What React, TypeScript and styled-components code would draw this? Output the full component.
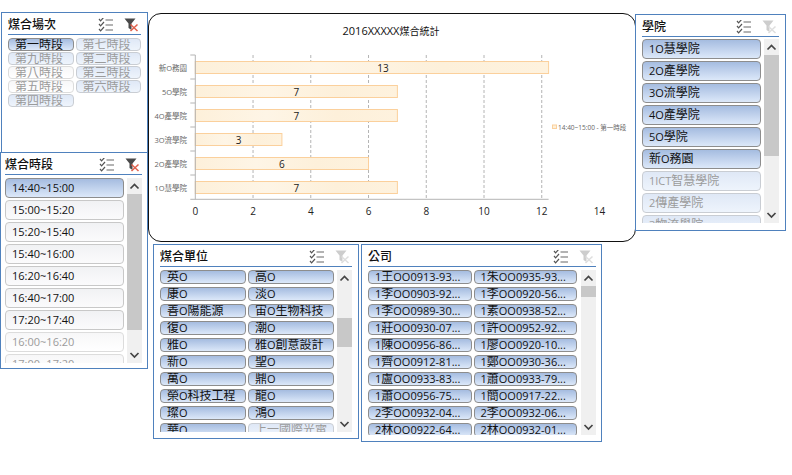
import styled, { createGlobalStyle } from "styled-components";

const FONT = `"Open Sans", "Noto Sans CJK TC", sans-serif`;

const GlobalStyle = createGlobalStyle`
  html, body {
    margin: 0;
    padding: 0;
    background: #fff;
    font-family: ${FONT};
  }
`;

const Canvas = styled.div`
  position: relative;
  width: 792px;
  height: 475px;
  overflow: hidden;
  background: #fff;
`;

const Panel = styled.section<{ $x: number; $y: number; $w: number; $h: number; $pl: number; $pr: number }>`
  position: absolute;
  left: ${(p) => p.$x}px;
  top: ${(p) => p.$y}px;
  width: ${(p) => p.$w}px;
  height: ${(p) => p.$h}px;
  box-sizing: border-box;
  border: 1px solid #4f81bd;
  background: #fff;
  padding: 0 ${(p) => p.$pr}px 0 ${(p) => p.$pl}px;
  display: flex;
  flex-direction: column;
  z-index: 2;
`;

const Header = styled.header`
  flex: none;
  box-sizing: border-box;
  height: 22px;
  padding: 2px 2px 0 0;
  border-bottom: 1px solid #4f81bd;
  display: flex;
  align-items: center;
  gap: 10px;
`;

const Title = styled.h2`
  flex: 1;
  margin: 0;
  font-size: 12px;
  font-weight: 500;
  color: #111;
  line-height: 18px;
`;

const Body = styled.div<{ $h: number; $top: number; $gutter: number }>`
  flex: none;
  margin-top: ${(p) => p.$top}px;
  height: ${(p) => p.$h}px;
  display: flex;
  gap: ${(p) => p.$gutter}px;
`;

const ItemGrid = styled.div<{ $cols: number; $row: number; $pitch: number }>`
  flex: 1;
  min-width: 0;
  overflow: hidden;
  display: grid;
  align-content: start;
  grid-template-columns: repeat(${(p) => p.$cols}, minmax(0, 1fr));
  grid-auto-rows: ${(p) => p.$row}px;
  column-gap: 2px;
  row-gap: ${(p) => p.$pitch - p.$row}px;
`;

type ItemState = "on" | "onFaded" | "off" | "offFaded";

const stateBg: Record<ItemState, string> = {
  on: "linear-gradient(#a5bce0, #dce8f9)",
  onFaded: "linear-gradient(#dfe8f6, #eef4fc)",
  off: "linear-gradient(#f1f2f4, #fbfbfc)",
  offFaded: "linear-gradient(#f7f7f8, #ffffff)",
};
const stateBorder: Record<ItemState, string> = {
  on: "#8d8d8d",
  onFaded: "#c9cdd3",
  off: "#c8c8c8",
  offFaded: "#dcdcdc",
};

const Item = styled.div<{ $state: ItemState }>`
  box-sizing: border-box;
  border: 1px solid ${(p) => stateBorder[p.$state]};
  border-radius: 4px;
  background: ${(p) => stateBg[p.$state]};
  color: ${(p) => (p.$state === "on" || p.$state === "off" ? "#111" : "#9b9b9b")};
  font-size: 11px;
  line-height: 12px;
  padding-left: 6px;
  display: flex;
  align-items: center;
  white-space: pre;
  overflow: hidden;
`;

// latin text runs a size smaller than the CJK glyphs next to it
const Cjk = styled.span`
  font-size: 12px;
`;

const Track = styled.div`
  flex: none;
  width: 15px;
  background: #f0f0f0;
  display: flex;
  flex-direction: column;
`;

const Arrow = styled.svg`
  flex: none;
  width: 15px;
  height: 16px;
`;

const Thumb = styled.div<{ $top: number; $h: number }>`
  flex: none;
  margin-top: ${(p) => p.$top - 16}px;
  height: ${(p) => p.$h}px;
  background: #c8c8c8;
`;

const Spacer = styled.div`
  flex: 1;
`;

const ChartFrame = styled.div`
  position: absolute;
  left: 148px;
  top: 13px;
  width: 488px;
  height: 229px;
  box-sizing: border-box;
  border: 1px solid #111;
  border-radius: 13px;
  background: #fff;
  overflow: hidden;
  z-index: 1;
`;

const ChartSvg = styled.svg`
  display: block;
  font-family: ${FONT};
`;

function MultiSelectIcon() {
  return (
    <svg width="16" height="14" viewBox="0 0 16 14" fill="none">
      {[2, 7, 12].map((y) => (
        <g key={y}>
          <path d={`M1 ${y - 1}l1.6 1.8L6 ${y - 3}`} stroke="#555" strokeWidth="1.2" />
          <path d={`M7.5 ${y}H15`} stroke="#8a8a8a" strokeWidth="1.3" />
        </g>
      ))}
    </svg>
  );
}

function ClearIcon({ active }: { active: boolean }) {
  return (
    <svg width="15" height="14" viewBox="0 0 15 14" fill="none">
      <path
        d="M0.5 0.5H11.5L7.5 5.5V12L4.5 10V5.5Z"
        fill={active ? "#4a4a4a" : "#cdcdcd"}
      />
      <path
        d="M6.5 6.5L13.5 13M13.5 6.5L6.5 13"
        stroke={active ? "#e0604c" : "#dedede"}
        strokeWidth="1.5"
      />
    </svg>
  );
}

function ScrollBar({ top, h }: { top: number; h: number }) {
  return (
    <Track>
      <Arrow viewBox="0 0 15 16" fill="none">
        <path d="M3.5 10.5L7.5 6.5L11.5 10.5" stroke="#444" strokeWidth="1.7" />
      </Arrow>
      <Thumb $top={top} $h={h} />
      <Spacer />
      <Arrow viewBox="0 0 15 16" fill="none">
        <path d="M3.5 6L7.5 10L11.5 6" stroke="#444" strokeWidth="1.7" />
      </Arrow>
    </Track>
  );
}

function ItemLabel({ text }: { text: string }) {
  const runs = text.split(/([\u4e00-\u9fff]+)/);
  return (
    <span>
      {runs.map((run, i) => (i % 2 === 1 ? <Cjk key={i}>{run}</Cjk> : run))}
    </span>
  );
}

type Entry = [string, ItemState];

function Slicer(props: {
  title: string;
  x: number;
  y: number;
  w: number;
  h: number;
  pl: number;
  pr: number;
  bodyH: number;
  bodyTop?: number;
  gutter?: number;
  cols: number;
  row: number;
  pitch: number;
  active: boolean;
  items: Entry[];
  thumb?: { top: number; h: number };
}) {
  return (
    <Panel $x={props.x} $y={props.y} $w={props.w} $h={props.h} $pl={props.pl} $pr={props.pr}>
      <Header>
        <Title>{props.title}</Title>
        <MultiSelectIcon />
        <ClearIcon active={props.active} />
      </Header>
      <Body $h={props.bodyH} $top={props.bodyTop ?? 3} $gutter={props.gutter ?? 3}>
        <ItemGrid $cols={props.cols} $row={props.row} $pitch={props.pitch}>
          {props.items.map(([label, state], i) => (
            <Item key={i} $state={state}>
              <ItemLabel text={label} />
            </Item>
          ))}
        </ItemGrid>
        {props.thumb && <ScrollBar top={props.thumb.top} h={props.thumb.h} />}
      </Body>
    </Panel>
  );
}

const sessions: Entry[] = [
  ["第一時段", "on"],
  ["第七時段", "onFaded"],
  ["第九時段", "onFaded"],
  ["第二時段", "onFaded"],
  ["第八時段", "offFaded"],
  ["第三時段", "onFaded"],
  ["第五時段", "offFaded"],
  ["第六時段", "onFaded"],
  ["第四時段", "onFaded"],
];

const times: Entry[] = [
  ["14:40~15:00", "on"],
  ["15:00~15:20", "off"],
  ["15:20~15:40", "off"],
  ["15:40~16:00", "off"],
  ["16:20~16:40", "off"],
  ["16:40~17:00", "off"],
  ["17:20~17:40", "off"],
  ["16:00~16:20", "offFaded"],
  ["17:00~17:20", "offFaded"],
];

const colleges: Entry[] = [
  ["1O慧學院", "on"],
  ["2O產學院", "on"],
  ["3O流學院", "on"],
  ["4O產學院", "on"],
  ["5O學院", "on"],
  ["新O務園", "on"],
  ["1ICT智慧學院", "onFaded"],
  ["2傳產學院", "onFaded"],
  ["3物流學院", "onFaded"],
];

const units: Entry[] = [
  ["英O", "on"],
  ["高O", "on"],
  ["康O", "on"],
  ["淡O", "on"],
  ["善O陽能源", "on"],
  ["宙O生物科技", "on"],
  ["復O", "on"],
  ["潮O", "on"],
  ["雅O", "on"],
  ["雅O創意設計", "on"],
  ["新O", "on"],
  ["聖O", "on"],
  ["萬O", "on"],
  ["鼎O", "on"],
  ["榮O科技工程", "on"],
  ["龍O", "on"],
  ["璨O", "on"],
  ["鴻O", "on"],
  ["華O", "on"],
  ["上一國際光電", "onFaded"],
];

const companies: Entry[] = [
  "1王OO0913-93...",
  "1朱OO0935-93...",
  "1李OO0903-92...",
  "1李OO0920-56...",
  "1李OO0989-30...",
  "1素OO0938-52...",
  "1莊OO0930-07...",
  "1許OO0952-92...",
  "1陳OO0956-86...",
  "1廖OO0920-10...",
  "1齊OO0912-81...",
  "1鄭OO0930-36...",
  "1盧OO0933-83...",
  "1蕭OO0933-79...",
  "1蕭OO0956-75...",
  "1簡OO0917-22...",
  "2李OO0932-04...",
  "2李OO0932-06...",
  "2林OO0922-64...",
  "2林OO0932-01...",
].map((label): Entry => [label, "on"]);

const bars = [
  { label: "新O務園", value: 13 },
  { label: "5O學院", value: 7 },
  { label: "4O產學院", value: 7 },
  { label: "3O流學院", value: 3 },
  { label: "2O產學院", value: 6 },
  { label: "1O慧學院", value: 7 },
];

function Chart() {
  // coordinates are relative to the chart frame's padding box
  const x0 = 46.3;
  const unit = 28.87;
  const top = 41;
  const bottom = 185.3;
  const plotEnd = 399.6;
  return (
    <ChartFrame>
      <ChartSvg width="486" height="227" viewBox="0 0 486 227">
        <defs>
          <linearGradient id="barFill" x1="0" y1="0" x2="1" y2="0">
            <stop offset="0" stopColor="#fdf0da" />
            <stop offset="0.35" stopColor="#fef5e6" />
            <stop offset="0.7" stopColor="#fdf0da" />
            <stop offset="1" stopColor="#fef2de" />
          </linearGradient>
        </defs>
        <text x="242" y="21" textAnchor="middle" fontSize="11" fill="#111">
          2016XXXXX<tspan fontSize="10">煤合統計</tspan>
        </text>
        {[2, 4, 6, 8, 10, 12].map((v) => (
          <line
            key={v}
            x1={x0 + v * unit}
            x2={x0 + v * unit}
            y1={top}
            y2={bottom}
            stroke="#b4b4b4"
            strokeDasharray="3 2"
          />
        ))}
        {bars.map((b, i) => {
          const y = top + 6.5 + i * 24;
          const w = Math.min(b.value * unit, plotEnd - x0);
          return (
            <g key={b.label}>
              <rect x={x0} y={y} width={w} height={12} fill="url(#barFill)" stroke="#fbd09c" />
              <text x={x0 + (b.value * unit) / 2} y={y + 10} textAnchor="middle" fontSize="10" fill="#222">
                {b.value}
              </text>
              <text x={38} y={y + 9.5} textAnchor="end" fontSize="7.5" fill="#666">
                {b.label}
              </text>
            </g>
          );
        })}
        <line x1={x0} x2={x0} y1={top} y2={bottom} stroke="#b4b4b4" />
        <line x1={x0 - 5} x2={plotEnd} y1={bottom} y2={bottom} stroke="#b4b4b4" />
        {[0, 1, 2, 3, 4, 5].map((i) => (
          <line key={i} x1={x0 - 5} x2={x0} y1={top + i * 24} y2={top + i * 24} stroke="#b4b4b4" />
        ))}
        {[0, 2, 4, 6, 8, 10, 12, 14].map((v) => (
          <text key={v} x={x0 + v * unit} y={201} textAnchor="middle" fontSize="10" fill="#222">
            {v}
          </text>
        ))}
        <rect x="403.5" y="111" width="4" height="3.5" fill="#fdf0da" stroke="#fbd09c" />
        <text x="409" y="115.5" fontSize="6.5" fill="#666">
          14:40~15:00 - 第一時段
        </text>
      </ChartSvg>
    </ChartFrame>
  );
}

export default function App() {
  return (
    <Canvas>
      <GlobalStyle />
      <Slicer title="煤合場次" x={1} y={12} w={147} h={141} pl={6} pr={6} bodyH={110} cols={2} row={13} pitch={14} active items={sessions} />
      <Slicer title="煤合時段" x={0} y={152} w={148} h={217} pl={4} pr={5} bodyH={185} cols={1} row={20} pitch={22} active items={times} thumb={{ top: 16, h: 136 }} />
      <Chart />
      <Slicer title="學院" x={635} y={14} w={151} h={217} pl={6} pr={6} bodyH={184} bodyTop={2} cols={1} row={20} pitch={22} active={false} items={colleges} thumb={{ top: 16, h: 101 }} />
      <Slicer title="煤合單位" x={153} y={244} w={206} h={195} pl={6} pr={6} bodyH={162} cols={2} row={14} pitch={17} active={false} items={units} thumb={{ top: 48, h: 29 }} />
      <Slicer title="公司" x={361} y={244} w={241} h={198} pl={6} pr={5} bodyH={165} gutter={4} cols={2} row={14} pitch={17} active={false} items={companies} thumb={{ top: 16, h: 11 }} />
    </Canvas>
  );
}
